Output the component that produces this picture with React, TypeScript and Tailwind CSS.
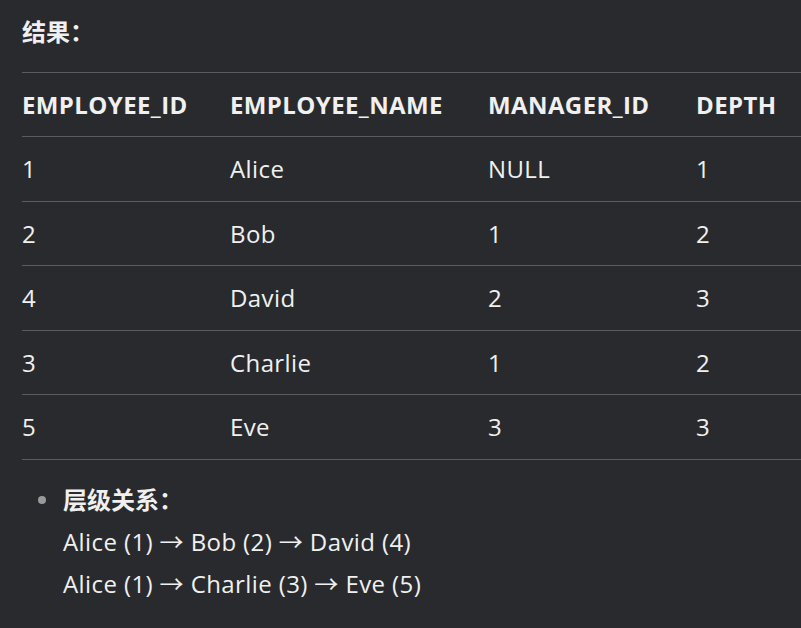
const columns = ["EMPLOYEE_ID", "EMPLOYEE_NAME", "MANAGER_ID", "DEPTH"];

const rows = [
  ["1", "Alice", "NULL", "1"],
  ["2", "Bob", "1", "2"],
  ["4", "David", "2", "3"],
  ["3", "Charlie", "1", "2"],
  ["5", "Eve", "3", "3"],
];

const colWidths = ["w-[208px]", "w-[258px]", "w-[208px]", "w-[126px]"];

export default function App() {
  return (
    <div
      className="h-[628px] w-[801px] overflow-hidden bg-[#292a2d] pl-[22px] text-[24px] tracking-[0.4px] text-[#f0f0f0]"
      style={{ fontFamily: '"Open Sans", "Noto Sans CJK SC", sans-serif' }}
    >
      {/* Heading */}
      <div className="pt-[14px] font-bold leading-[36px] tracking-normal">结果：</div>

      {/* Result table */}
      <div className="mt-[22px] w-[800px] border-t border-[#5c5c5e]">
        <div className="flex border-b border-[#5c5c5e] py-[18px] font-bold leading-[27px]">
          {columns.map((c, i) => (
            <div key={c} className={`${colWidths[i]} shrink-0`}>
              {c}
            </div>
          ))}
        </div>
        {rows.map((r, ri) => (
          <div key={ri} className="flex border-b border-[#5c5c5e] py-[18px] leading-[27.6px]">
            {r.map((cell, i) => (
              <div key={i} className={`${colWidths[i]} shrink-0`}>
                {cell}
              </div>
            ))}
          </div>
        ))}
      </div>

      {/* Hierarchy notes */}
      <ul className="mt-[19px] pl-[41px] leading-[42px]">
        <li className="relative">
          <span className="absolute left-[-25px] top-[17px] h-[8px] w-[8px] rounded-full bg-[#9a9a9a]" />
          <div className="font-bold tracking-normal">层级关系：</div>
          <div>Alice (1) → Bob (2) → David (4)</div>
          <div>Alice (1) → Charlie (3) → Eve (5)</div>
        </li>
      </ul>
    </div>
  );
}
